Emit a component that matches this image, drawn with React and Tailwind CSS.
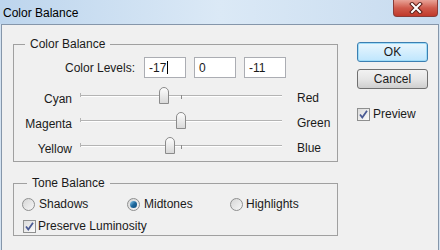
import React from 'react';

const FONT = { fontFamily: '"Liberation Sans", Arial, sans-serif' };

const sliders = [
  { left: 'Cyan', right: 'Red', value: -17 },
  { left: 'Magenta', right: 'Green', value: 0 },
  { left: 'Yellow', right: 'Blue', value: -11 },
];

function CheckBox() {
  return (
    <span className="flex h-[13px] w-[13px] items-center justify-center border border-[#8e8f8f] bg-gradient-to-br from-[#dcdcdc] to-[#fbfbfb]">
      <svg width="11" height="11" viewBox="0 0 11 11">
        <path d="M2 5.5 L4.3 8.5 L9 1.8" fill="none" stroke="#4a5a94" strokeWidth="1.8" />
      </svg>
    </span>
  );
}

function Radio({ checked }) {
  return (
    <span className="flex h-[13px] w-[13px] items-center justify-center rounded-full border border-[#8e8f8f] bg-gradient-to-br from-[#d6d6d6] to-[#f7f7f7]">
      {checked && (
        <span className="h-[7px] w-[7px] rounded-full bg-gradient-to-br from-[#8fd2f2] via-[#1f6a9e] to-[#0f4a78]" />
      )}
    </span>
  );
}

function Slider({ value }) {
  const left = ((value + 100) / 200) * 202 - 5;
  return (
    <div className="relative h-full w-[202px]">
      <div className="absolute left-0 right-0 top-[11px] h-px bg-[#b4b4b4]" />
      <div className="absolute left-0 right-0 top-[12px] h-px bg-white" />
      <div className="absolute left-0 top-[9px] h-[4px] w-px bg-[#b4b4b4]" />
      <div className="absolute left-[101px] top-[11px] h-[4px] w-px bg-[#8a8a8a]" />
      <div
        className="absolute top-[3px] h-[17px] w-[10px] rounded-t-[5px] border border-[#8b8b8b] bg-gradient-to-b from-[#fdfdfd] to-[#d9d9d9]"
        style={{ left }}
      />
    </div>
  );
}

export default function App() {
  return (
    <div className="flex h-[250px] w-[440px] flex-col overflow-hidden bg-[#d3e2f1] text-[12px] text-[#1a1a1a]" style={FONT}>
      {/* title bar */}
      <div className="flex h-[24px] items-start justify-between bg-gradient-to-r from-[#bdd5ed] via-[#dbe9f6] to-[#c7dbef]">
        <span className="pl-[3px] pt-[4px] text-[12px] text-black">Color Balance</span>
        <div className="mr-[2px] flex h-[17px] w-[45px] items-center justify-center rounded-b-[4px] border border-t-0 border-[#8a3c38] bg-gradient-to-b from-[#e8a297] via-[#cf5a4c] to-[#c0392b]">
          <svg width="14" height="12" viewBox="0 0 14 12">
            <path d="M3 2 L11 10 M11 2 L3 10" stroke="#5a1e18" strokeWidth="4" strokeLinecap="square" />
            <path d="M3 2 L11 10 M11 2 L3 10" stroke="#fff" strokeWidth="2" strokeLinecap="square" />
          </svg>
        </div>
      </div>

      {/* body */}
      <div className="mx-px flex flex-1 items-start border-x border-t border-[#8596aa] bg-[#f0f0f0] pl-[11px] pt-[12px]">
        <div className="flex flex-col">
          <fieldset className="h-[125px] w-[325px] border border-[#a0a0a0]">
            <legend className="ml-[11px] px-[5px] leading-[14px]">Color Balance</legend>
            <div className="flex items-center pt-[6px]">
              <span className="w-[121px] text-right">Color Levels:</span>
              <div className="ml-[9px] flex gap-[8px]">
                <div className="flex h-[21px] w-[42px] items-center border border-[#abadb3] bg-white pl-[4px]">
                  -17<span className="ml-px h-[13px] w-px bg-black" />
                </div>
                <div className="flex h-[21px] w-[42px] items-center border border-[#abadb3] bg-white pl-[4px]">0</div>
                <div className="flex h-[21px] w-[42px] items-center border border-[#abadb3] bg-white pl-[4px]">-11</div>
              </div>
            </div>
            <div className="mt-[6px] flex flex-col">
              {sliders.map((s) => (
                <div key={s.left} className="flex h-[25px] items-center">
                  <span className="w-[58px] pt-[4px] text-right">{s.left}</span>
                  <div className="ml-[8px] h-full">
                    <Slider value={s.value} />
                  </div>
                  <span className="ml-[15px] pt-[3px]">{s.right}</span>
                </div>
              ))}
            </div>
          </fieldset>

          <fieldset className="mt-[14px] h-[60px] w-[325px] border border-[#a0a0a0]">
            <legend className="ml-[13px] px-[5px] leading-[14px]">Tone Balance</legend>
            <div className="box-content flex h-[16px] items-center pl-[8px] pt-[6px]">
              <label className="flex w-[105px] items-center gap-[4px]">
                <Radio />
                <span>Shadows</span>
              </label>
              <label className="flex w-[103px] items-center gap-[4px]">
                <Radio checked />
                <span>Midtones</span>
              </label>
              <label className="flex items-center gap-[3px]">
                <Radio />
                <span>Highlights</span>
              </label>
            </div>
            <label className="mt-[6px] flex h-[16px] items-center gap-[2px] pl-[9px]">
              <CheckBox />
              <span>Preserve Luminosity</span>
            </label>
          </fieldset>
        </div>

        {/* buttons */}
        <div className="ml-[19px] mt-[5px] flex flex-col">
          <button className="flex h-[20px] w-[71px] items-center justify-center rounded-[3px] border border-[#3c7fb1] bg-gradient-to-b from-[#eaf6fd] to-[#bee6fd] shadow-[inset_0_0_0_1px_#9fdcf8]">
            OK
          </button>
          <button className="mt-[7px] flex h-[20px] w-[71px] items-center justify-center rounded-[3px] border border-[#707070] bg-gradient-to-b from-[#f2f2f2] via-[#e6e6e6] to-[#cfcfcf]">
            Cancel
          </button>
          <label className="mt-[16px] flex items-center gap-[3px]">
            <CheckBox />
            <span>Preview</span>
          </label>
        </div>
      </div>
    </div>
  );
}
